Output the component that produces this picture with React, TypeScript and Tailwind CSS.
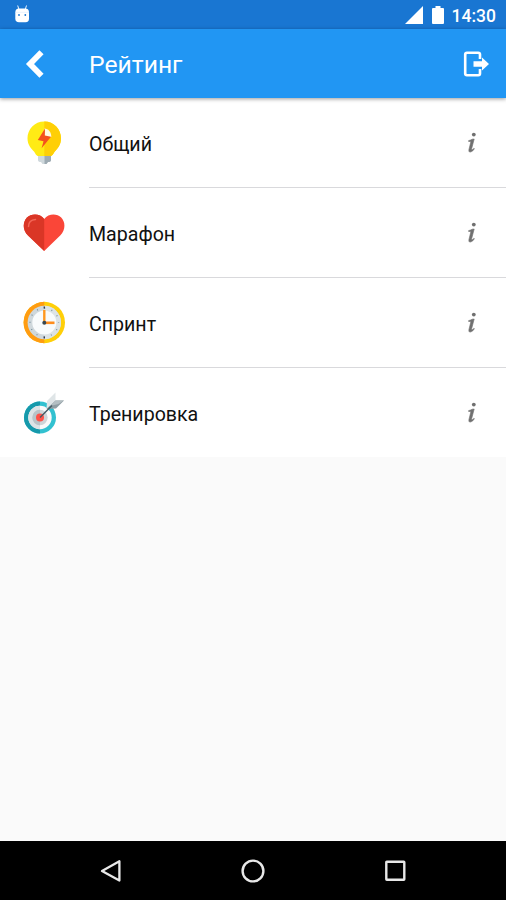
import React from "react";

function BulbIcon() {
  return (
    <svg viewBox="0 0 60 60" className="size-[60px]">
      <path d="M24 43h13v5q0 2-3 2l-1.500 2h-4l-1.500-2q-3 0-3-2z" fill="#cfd8dc" />
      <path d="M30.500 43H37v5q0 2-3 2l-1.500 2h-2z" fill="#9eabb3" />
      <path d="M30.300 9.500C20.500 9.500 13.500 17.300 13.500 26.300c0 7 4 10.500 6.500 13.200 1.500 1.700 2 4.500 4.500 4.500h11.800c2.500 0 3-2.800 4.500-4.500 2.500-2.700 6.200-6.200 6.200-13.200 0-9-7-16.800-16.700-16.800z" fill="#ffeb15" />
      <path d="M30.300 9.500c9.700 0 16.700 7.800 16.700 16.800 0 7-3.700 10.500-6.200 13.200-1.500 1.700-2 4.500-4.500 4.500h-6z" fill="#ffcf06" />
      <path d="M30.300 16.500c4 0 7 3.500 7 8.500h-7z" fill="#fffbe2" />
      <path d="M31 16.500 23.800 28l5.700 1.200-1.900 7L37 24.700l-6.200-1.200z" fill="#f4511e" />
    </svg>
  );
}

function HeartIcon() {
  return (
    <svg viewBox="0 0 60 60" className="size-[60px]">
      <path d="M30.200 49 14 33.500c-6-6-5-14-1-18s13-4.500 17.200 1.500c4.500-6 13-5.500 17-1.500s5 12-1 18z" fill="#fa4638" />
      <path d="M30.200 49 14 33.500c-6-6-5-14-1-18s13-4.500 17.200 1.500z" fill="#da3626" />
      <path d="M14.500 24.500q0-6.500 7-7" fill="none" stroke="#f36757" strokeWidth="1.500" strokeLinecap="round" />
    </svg>
  );
}

function ClockIcon() {
  return (
    <svg viewBox="0 0 60 60" className="size-[60px]">
      <circle cx="30.300" cy="30.500" r="20.700" fill="#ffcf08" />
      <path d="M30.300 9.800a20.700 20.700 0 0 0 0 41.400z" fill="#ff9c12" />
      <circle cx="30.300" cy="30.500" r="16.700" fill="#cfd8dc" />
      <path d="M30.300 13.800a16.700 16.700 0 0 1 0 33.400z" fill="#dce3e6" />
      <circle cx="30.300" cy="30.500" r="12" fill="#f8fbfc" />
      <circle cx="30.300" cy="30.500" r="14.300" fill="none" stroke="#78909c" strokeWidth="1.300" strokeDasharray="1 6.487" strokeDashoffset=".5" />
      <path d="M30.300 14.500v2M30.300 44.500v2" stroke="#333a4d" strokeWidth="1.400" />
      <path d="M30.300 29V18" stroke="#ff9820" strokeWidth="2.400" />
      <path d="M31 30.800h9.500" stroke="#ff8d1d" strokeWidth="2.600" />
      <circle cx="30.300" cy="30.700" r="2" fill="#37474f" />
    </svg>
  );
}

function TargetIcon() {
  return (
    <svg viewBox="0 0 60 60" className="size-[60px]">
      <circle cx="26" cy="35.500" r="16" fill="#32c1d0" />
      <path d="M26 19.500a16 16 0 0 0 0 32z" fill="#1699ab" />
      <circle cx="26" cy="35.500" r="11.700" fill="#fafafa" />
      <path d="M26 23.800a11.700 11.700 0 0 0 0 23.400z" fill="#dce3e6" />
      <circle cx="26" cy="35.500" r="7.700" fill="#cfd5d8" />
      <path d="M26 27.800a7.700 7.700 0 0 0 0 15.400z" fill="#b8c3c8" />
      <circle cx="26" cy="35.500" r="4" fill="#ff5148" />
      <path d="m32.500 27 .5-8 8.500-8.500V19z" fill="#dfe5e7" />
      <path d="m32.500 27 9-8.500h8.500L42 26.500z" fill="#8f9da3" />
      <path d="m36 24 5.500-5.500H50L44.500 22z" fill="#b3bec2" />
      <path d="m26 35.500 12-12" stroke="#455a64" strokeWidth="1.500" />
    </svg>
  );
}

function InfoIcon() {
  return (
    <svg viewBox="0 .7 14 24" className="mr-[27px] ml-auto h-6 w-[14px]">
      <circle cx="8.800" cy="4.300" r="1.900" fill="#707070" />
      <path d="M3.500 10.400q2.500-.8 3.700-1.500l2-.2-2.500 9.600q-.3 1.200.2 1.200.8 0 2-1.500l.5.400q-2 3.400-4.200 3.400-1.900 0-1.300-2.400l1.700-6.900q.4-1.400-.4-1.400l-1.500.1z" fill="#707070" stroke="#707070" strokeWidth=".6" />
    </svg>
  );
}

const items = [
  { label: "Общий", Icon: BulbIcon },
  { label: "Марафон", Icon: HeartIcon },
  { label: "Спринт", Icon: ClockIcon },
  { label: "Тренировка", Icon: TargetIcon },
];

function StatusBar() {
  return (
    <div className="flex h-[29px] items-center bg-[#1976d2] text-white">
      <svg viewBox="0 0 18 20" className="ml-[14px] h-5 w-[18px]">
        <path d="m3.700.5 1.100 3.500M12.500.5 11.400 4" stroke="#eef6ff" strokeWidth="1" />
        <path d="M1.300 7.500Q1.300 3.500 5 3.500h6.300Q15 3.500 15 7.500v6Q15 17.300 11.500 17.300H5q-3.700 0-3.700-3.800z" fill="#fff" />
        <path d="M1.300 7.300H15" stroke="#d0e4fa" strokeWidth=".5" />
        <circle cx="5" cy="10" r=".9" fill="#1976d2" />
        <circle cx="11.300" cy="10" r=".9" fill="#1976d2" />
      </svg>
      <svg viewBox="0 0 18 18" className="ml-auto size-[18px]">
        <path d="M0 18 18 0v18z" fill="#fff" />
      </svg>
      <svg viewBox="0 0 12 18" className="ml-[9px] h-[18px] w-3">
        <path d="M1 2h2.500V0h5v2H11q1 0 1 1v14q0 1-1 1H1q-1 0-1-1V3q0-1 1-1z" fill="#fff" />
      </svg>
      <span className="mr-[10px] ml-2 pt-1 text-[17.500px] leading-none font-medium">14:30</span>
    </div>
  );
}

function Toolbar() {
  return (
    <header className="z-10 flex h-[69px] items-center bg-[#2196f3] text-white shadow-[0_1px_4px_rgba(0,0,0,0.4)]">
      <button aria-label="Назад" className="ml-[25px]">
        <svg viewBox="0 0 20 28" className="h-7 w-5">
          <path d="M16.500 2.200 5 14l11.500 11.800" fill="none" stroke="#fff" strokeWidth="5.800" />
        </svg>
      </button>
      <h1 className="ml-[44px] pt-[3px] text-[24.700px] leading-none">Рейтинг</h1>
      <button aria-label="Выйти" className="mr-4 ml-auto">
        <svg viewBox="0 0 27 26" className="h-[26px] w-[27px]">
          <path d="M17 8V3.500q0-1.700-1.700-1.700H4Q2.200 1.800 2.200 3.500v19q0 1.700 1.800 1.700h11.300q1.700 0 1.700-1.700V18" fill="none" stroke="#fff" strokeWidth="2.600" />
          <path d="M10.500 10.300H19V6.500l7 6.500-7 6.500v-3.800h-8.500z" fill="#fff" />
        </svg>
      </button>
    </header>
  );
}

export default function App() {
  return (
    <div className="flex h-[900px] w-[506px] flex-col overflow-hidden bg-[#fafafa] font-[Roboto,sans-serif]">
      <StatusBar />
      <Toolbar />
      <main className="flex-1">
        <ul className="bg-white">
          {items.map(({ label, Icon }, index) => (
            <li key={label} className={`flex pl-[14px] ${index < 3 ? "h-[90px]" : "h-[89px]"}`}>
              <div className="mt-[14px] h-[60px] w-[75px]">
                <Icon />
              </div>
              <div className={`flex flex-1 items-center ${index < 3 ? "border-b border-[#d9d9dc]" : ""}`}>
                <span className="pt-1 text-[19.600px] leading-none text-[#111]">{label}</span>
                <InfoIcon />
              </div>
            </li>
          ))}
        </ul>
      </main>
      <nav className="flex h-[59px] items-center bg-black">
        <svg viewBox="0 0 24 26" className="ml-[99px] h-[26px] w-6">
          <path d="M20.400 3.300v19.200L3 13z" fill="none" stroke="#e8e8e8" strokeWidth="2.300" strokeLinejoin="round" />
        </svg>
        <svg viewBox="0 0 24 24" className="ml-[118px] size-6">
          <circle cx="12" cy="12" r="10.400" fill="none" stroke="#e8e8e8" strokeWidth="2.400" />
        </svg>
        <svg viewBox="0 0 24 24" className="ml-[118px] size-6">
          <rect x="3.300" y="2.800" width="18" height="18" rx=".5" fill="none" stroke="#e8e8e8" strokeWidth="2.400" />
        </svg>
      </nav>
    </div>
  );
}
